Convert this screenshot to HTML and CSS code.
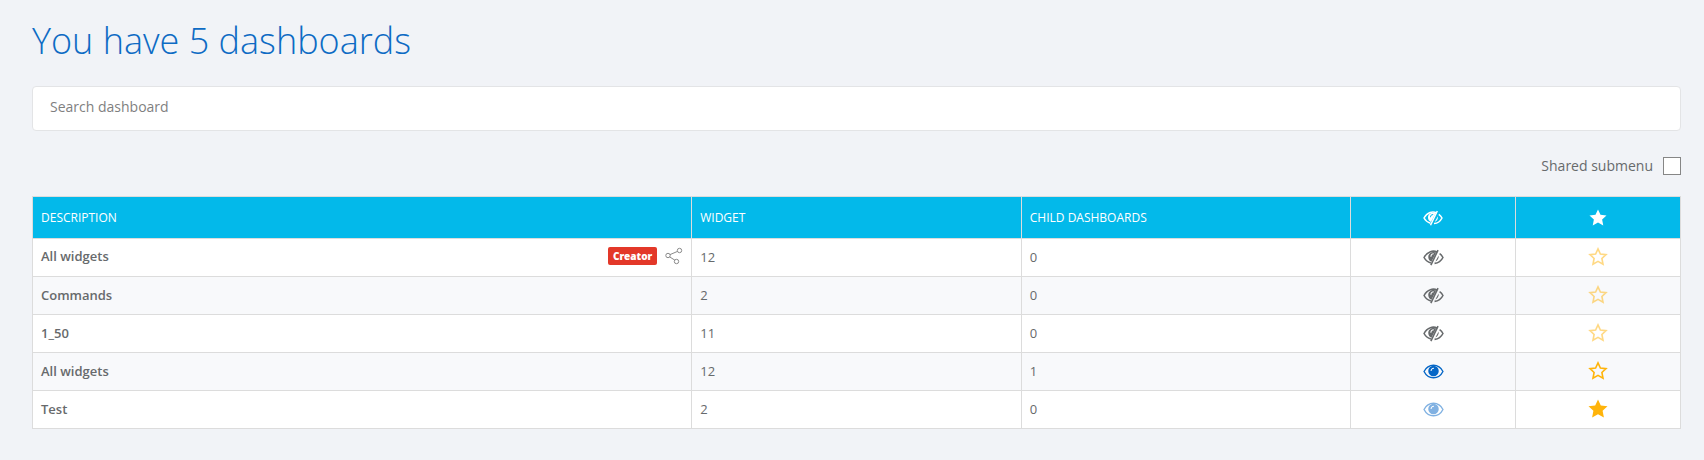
FILE: index.html
```
<!DOCTYPE html>
<html lang="en">
<head>
    <meta charset="UTF-8">
    <meta name="viewport" content="width=device-width, initial-scale=1.0">
    <title>Dashboards</title>
    <link rel="stylesheet" href="styles.css">
</head>
<body>
    <svg class="sprite" aria-hidden="true">
        <symbol id="eye" viewBox="0 0 20 14">
            <path d="M1 7C5-1 15-1 19 7C15 15 5 15 1 7Z" fill="none" stroke="currentColor" stroke-width="1.3"/>
            <path fill-rule="evenodd" d="M10 1.500a5 5 0 1 0 0 10a5 5 0 1 0 0-10ZM7.200 6.600h1c0-1.400.8-2.200 2.200-2.200v-1c-2 0-3.200 1.200-3.200 3.200Z" fill="currentColor"/>
        </symbol>
        <symbol id="eye-off" viewBox="0 0 20 16">
            <path d="M7.500 13.200C4.800 12.500 2.500 10.800 1 8C4 2 10 .8 13.500 3M15.800 4.400C17.100 5.300 18.200 6.500 19 8C17.300 11.400 14.300 13.300 11 13.600" fill="none" stroke="currentColor" stroke-width="1.500"/>
            <path fill-rule="evenodd" d="M12.600 3.200C9 1.600 5 3.700 5 7.500c0 2.100 1.200 3.700 3 4.500ZM7 7.200h1c0-1.400.8-2.300 2.200-2.300v-1C8.200 3.900 7 5.200 7 7.200Z" fill="currentColor"/>
            <path d="M14.900 6.200c.4 2.600-.9 4.700-3.100 5.600Z" fill="currentColor"/>
            <path d="M14.300 1L7.500 15.200" stroke="currentColor" stroke-width="1.500"/>
        </symbol>
        <symbol id="star" viewBox="0 0 20 19">
            <path d="M10 .5L12.800 6.500L19.500 7.300L14.600 11.800L15.900 18.500L10 15.200L4.100 18.500L5.400 11.800L.5 7.300L7.200 6.500Z" fill="currentColor"/>
        </symbol>
        <symbol id="star-o" viewBox="0 0 20 19">
            <path d="M10 1.900L12.400 7L18 7.700L13.900 11.500L15 17.200L10 14.400L5 17.200L6.100 11.500L2 7.700L7.600 7Z" fill="none" stroke="currentColor" stroke-width="1.600"/>
        </symbol>
        <symbol id="share" viewBox="0 0 18 18">
            <g fill="none" stroke="currentColor">
                <circle cx="3" cy="8.500" r="2.200"/>
                <circle cx="14.500" cy="3.500" r="2.200"/>
                <circle cx="11.500" cy="14.500" r="2.200"/>
                <path d="M5 7.600L12.500 4.400M4.700 9.900L9.900 13.200"/>
            </g>
        </symbol>
    </svg>

    <main class="page">
        <h1 class="page-title">You have 5 dashboards</h1>
        <input type="search" class="search" placeholder="Search dashboard" aria-label="Search dashboard">

        <div class="options">
            <label for="shared">Shared submenu</label>
            <input type="checkbox" id="shared" class="check">
        </div>

        <table class="dashboards">
            <colgroup>
                <col class="col-description">
                <col class="col-count">
                <col class="col-count">
                <col class="col-icon">
                <col class="col-icon">
            </colgroup>
            <thead>
                <tr>
                    <th>DESCRIPTION</th>
                    <th>WIDGET</th>
                    <th>CHILD DASHBOARDS</th>
                    <th class="center" aria-label="Visibility"><svg class="eye-off small"><use href="#eye-off"/></svg></th>
                    <th class="center" aria-label="Favourite"><svg class="star small"><use href="#star"/></svg></th>
                </tr>
            </thead>
            <tbody>
                <tr>
                    <td>
                        <div class="description">
                            <a href="#" class="name">All widgets</a>
                            <span class="badge">Creator</span>
                            <button type="button" class="icon-btn share" aria-label="Share"><svg><use href="#share"/></svg></button>
                        </div>
                    </td>
                    <td>12</td>
                    <td>0</td>
                    <td class="center"><button type="button" class="icon-btn" aria-label="Show"><svg class="eye-off"><use href="#eye-off"/></svg></button></td>
                    <td class="center"><button type="button" class="icon-btn gold faded" aria-label="Favourite"><svg class="star"><use href="#star-o"/></svg></button></td>
                </tr>
                <tr>
                    <td><a href="#" class="name">Commands</a></td>
                    <td>2</td>
                    <td>0</td>
                    <td class="center"><button type="button" class="icon-btn" aria-label="Show"><svg class="eye-off"><use href="#eye-off"/></svg></button></td>
                    <td class="center"><button type="button" class="icon-btn gold faded" aria-label="Favourite"><svg class="star"><use href="#star-o"/></svg></button></td>
                </tr>
                <tr>
                    <td><a href="#" class="name">1_50</a></td>
                    <td>11</td>
                    <td>0</td>
                    <td class="center"><button type="button" class="icon-btn" aria-label="Show"><svg class="eye-off"><use href="#eye-off"/></svg></button></td>
                    <td class="center"><button type="button" class="icon-btn gold faded" aria-label="Favourite"><svg class="star"><use href="#star-o"/></svg></button></td>
                </tr>
                <tr>
                    <td><a href="#" class="name">All widgets</a></td>
                    <td>12</td>
                    <td>1</td>
                    <td class="center"><button type="button" class="icon-btn blue" aria-label="Hide"><svg class="eye"><use href="#eye"/></svg></button></td>
                    <td class="center"><button type="button" class="icon-btn gold" aria-label="Favourite"><svg class="star"><use href="#star-o"/></svg></button></td>
                </tr>
                <tr>
                    <td><a href="#" class="name">Test</a></td>
                    <td>2</td>
                    <td>0</td>
                    <td class="center"><button type="button" class="icon-btn blue faded" aria-label="Hide"><svg class="eye"><use href="#eye"/></svg></button></td>
                    <td class="center"><button type="button" class="icon-btn gold" aria-label="Remove favourite"><svg class="star"><use href="#star"/></svg></button></td>
                </tr>
            </tbody>
        </table>
    </main>
</body>
</html>
```
FILE: styles.css
```
* {
    box-sizing: border-box;
}
body {
    margin: 0;
    background: #f1f3f7;
    color: #676a6c;
    font-family: "Open Sans", Arial, sans-serif;
    font-size: 13px;
    line-height: 21px;
}
.sprite {
    display: none;
}
.page {
    padding: 16px 23px 32px 32px;
}
.page-title {
    margin: 0 0 20px;
    color: #0d6bc4;
    font-size: 36px;
    font-weight: 300;
    line-height: 50px;
}
.search {
    display: block;
    width: 100%;
    height: 45px;
    padding: 0 17px 4px;
    border: 1px solid #e3e4e6;
    border-radius: 4px;
    background: #fff;
    font-family: inherit;
    font-size: 14px;
    appearance: none;
}
.search::placeholder {
    color: #7f7f7f;
}
.options {
    display: flex;
    justify-content: flex-end;
    align-items: center;
    gap: 10px;
    margin: 26px 0 21px;
    font-size: 14px;
    line-height: 18px;
}
.check {
    width: 18px;
    height: 18px;
    margin: 0;
    border: 1px solid #868686;
    background: #fff;
    appearance: none;
}
.check:checked {
    background: #03b9ea;
}
.dashboards {
    width: 100%;
    table-layout: fixed;
    border-collapse: collapse;
    background: #fff;
}
.col-description {
    width: 40%;
}
.col-count {
    width: 20%;
}
.col-icon {
    width: 164px;
}
th, td {
    padding: 8px;
    border: 1px solid #dcdcdc;
    text-align: left;
}
th {
    padding: 10px 8px;
    background: #03b9ea;
    color: #fff;
    font-size: 12px;
    font-weight: 400;
}
tbody tr:nth-child(even) {
    background: #f8f9fb;
}
.center {
    text-align: center;
}
.description {
    display: flex;
    align-items: center;
    height: 18px;
    margin-bottom: 3px;
}
.name {
    margin-right: auto;
    color: inherit;
    font-weight: 600;
    text-decoration: none;
}
.badge {
    padding: 0 5px;
    border-radius: 2px;
    background: #e33829;
    color: #fff;
    font-size: 10px;
    font-weight: 800;
    line-height: 18px;
}
svg {
    display: block;
    margin: 0 auto;
}
.icon-btn {
    display: block;
    margin: 0 auto;
    padding: 0;
    border: 0;
    background: none;
    color: #676a6c;
    cursor: pointer;
}
.share {
    margin: 0 0 0 8px;
    color: #8a8a8a;
}
.share svg {
    width: 18px;
    height: 18px;
}
.eye {
    width: 21px;
    height: 15px;
}
.eye-off {
    width: 21px;
    height: 17px;
}
.star {
    width: 20px;
    height: 19px;
}
.eye-off.small {
    width: 20px;
    height: 16px;
}
.star.small {
    width: 18px;
    height: 17px;
}
.gold {
    padding-bottom: 2px;
    color: #ffb40a;
}
.blue {
    color: #0566c6;
}
.faded {
    opacity: 0.5;
}
```
